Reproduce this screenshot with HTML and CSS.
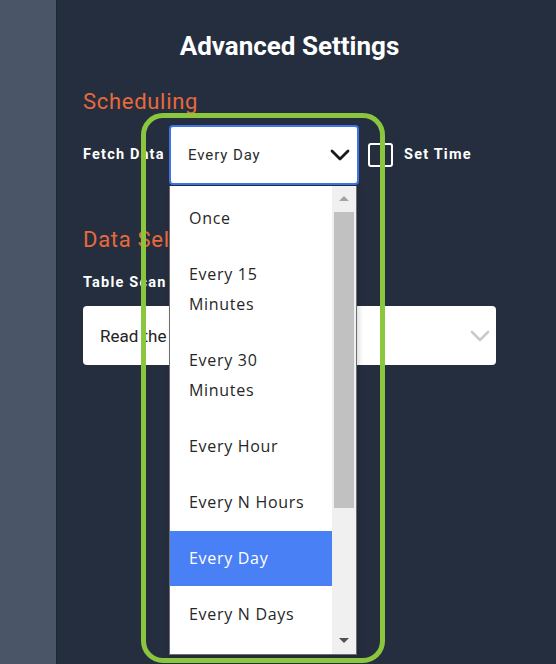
FILE: index.html
```html
<!DOCTYPE html>
<html>
<head>
<meta charset="utf-8">
<link rel="stylesheet" href="styles.css">
</head>
<body>
<div class="app">
  <aside class="rail"></aside>
  <main class="panel">
    <h1 class="title">Advanced Settings</h1>

    <section class="group">
      <h2 class="group-title">Scheduling</h2>
      <div class="field-row">
        <span class="label label-fetch">Fetch Data</span>
        <div class="select select-focus">
          <span class="select-value">Every Day</span>
          <svg class="chev" width="20" height="14" viewBox="0 0 20 14"><polyline points="2,3 10,11 18,3" fill="none" stroke="#1a1a1a" stroke-width="2.8" stroke-linecap="round" stroke-linejoin="round"/></svg>
        </div>
        <span class="checkbox"></span>
        <span class="label">Set Time</span>
      </div>
    </section>

    <section class="group group-data">
      <h2 class="group-title">Data Selection</h2>
      <span class="label label-block">Table Scan</span>
      <div class="select select-wide">
        <span class="select-value select-value-dark">Read the</span>
        <svg class="chev" width="22" height="14" viewBox="0 0 22 14"><polyline points="3,3 11,11 19,3" fill="none" stroke="#c9c9c9" stroke-width="2.6" stroke-linecap="round" stroke-linejoin="round"/></svg>
      </div>
    </section>
  </main>
</div>

<div class="dropdown">
  <ul class="options">
    <li>Once</li>
    <li>Every 15 Minutes</li>
    <li>Every 30 Minutes</li>
    <li>Every Hour</li>
    <li>Every N Hours</li>
    <li class="selected">Every Day</li>
    <li>Every N Days</li>
  </ul>
  <div class="scrollbar">
    <span class="arrow arrow-up"></span>
    <span class="thumb"></span>
    <span class="arrow arrow-down"></span>
  </div>
</div>

<div class="highlight-frame"></div>
</body>
</html>
```

FILE: styles.css
```css
html, body {
  margin: 0;
  padding: 0;
}
body {
  width: 556px;
  height: 664px;
  overflow: hidden;
  background: #242e3e;
  font-family: Roboto, "Liberation Sans", sans-serif;
  position: relative;
}
.app {
  display: flex;
  height: 664px;
}
.rail {
  width: 56px;
  flex: none;
  background: #4a5567;
  border-right: 1px solid #1f2734;
}
.panel {
  width: 413px;
  padding: 32px 27px 0 26px;
  flex: none;
}
.title {
  margin: 0;
  font-size: 26px;
  line-height: 28px;
  font-weight: 700;
  color: #ffffff;
  text-align: center;
}
.group-title {
  margin: 30px 0 0;
  font-size: 22px;
  line-height: 24px;
  font-weight: 400;
  letter-spacing: 0.7px;
  color: #e8693b;
}
.field-row {
  display: flex;
  align-items: center;
  margin-top: 11px;
  height: 60px;
}
.label {
  font-size: 14.5px;
  line-height: 16px;
  font-weight: 700;
  letter-spacing: 1.2px;
  color: #ffffff;
}
.label-fetch {
  width: 86px;
  flex: none;
  white-space: nowrap;
}
.select {
  box-sizing: border-box;
  height: 60px;
  background: #ffffff;
  border-radius: 4px;
  display: flex;
  align-items: center;
  justify-content: space-between;
}
.select-focus {
  width: 190px;
  border: 2px solid #3f73e6;
  padding: 0 7px 0 17px;
}
.select-value {
  font-size: 15px;
  letter-spacing: 0.9px;
  color: #2b2b2b;
}
.select-value-dark {
  font-size: 17px;
  letter-spacing: 0px;
  color: #222222;
}
.checkbox {
  width: 25px;
  height: 24px;
  box-sizing: border-box;
  border: 2px solid #ffffff;
  border-radius: 3px;
  margin: 0 11px 0 9px;
  flex: none;
}
.group-data .group-title {
  margin-top: 43px;
}
.label-block {
  display: block;
  margin-top: 23px;
}
.select-wide {
  margin-top: 15px;
  width: 413px;
  height: 59px;
  padding: 0 5px 0 17px;
}

/* open dropdown list overlay */
.dropdown {
  position: absolute;
  left: 169px;
  top: 186px;
  width: 188px;
  height: 469px;
  box-sizing: border-box;
  background: #ffffff;
  border: 1px solid #6e6e6e;
  border-top: none;
  display: flex;
  overflow: hidden;
  box-shadow: 2px 2px 5px rgba(0, 0, 0, 0.15);
}
.options {
  list-style: none;
  margin: 0;
  padding: 4px 0 0;
  width: 162px;
  flex: none;
}
.options li {
  font-family: "Open Sans", "DejaVu Sans", sans-serif;
  font-size: 16px;
  line-height: 30px;
  letter-spacing: 0.7px;
  color: #262626;
  padding: 13px 19px;
}
.options li.selected {
  background: #4a80f5;
  color: #ffffff;
  padding-top: 12px;
  padding-bottom: 13px;
  margin-top: 1px;
}
.scrollbar {
  flex: 1;
  background: #f0f0f0;
  display: flex;
  flex-direction: column;
  align-items: center;
  padding: 0 1px;
}
.arrow {
  width: 0;
  height: 0;
  border-left: 5px solid transparent;
  border-right: 5px solid transparent;
}
.arrow-up {
  border-bottom: 5px solid #a3a3a3;
  margin-top: 10px;
}
.arrow-down {
  border-top: 5px solid #505050;
  margin-top: auto;
  margin-bottom: 11px;
}
.thumb {
  width: 20px;
  height: 296px;
  background: #c1c1c1;
  margin-top: 11px;
}

/* green annotation frame */
.highlight-frame {
  position: absolute;
  left: 141px;
  top: 113px;
  width: 244px;
  height: 550px;
  box-sizing: border-box;
  border: 5px solid #8bc63f;
  border-radius: 22px;
}
```
